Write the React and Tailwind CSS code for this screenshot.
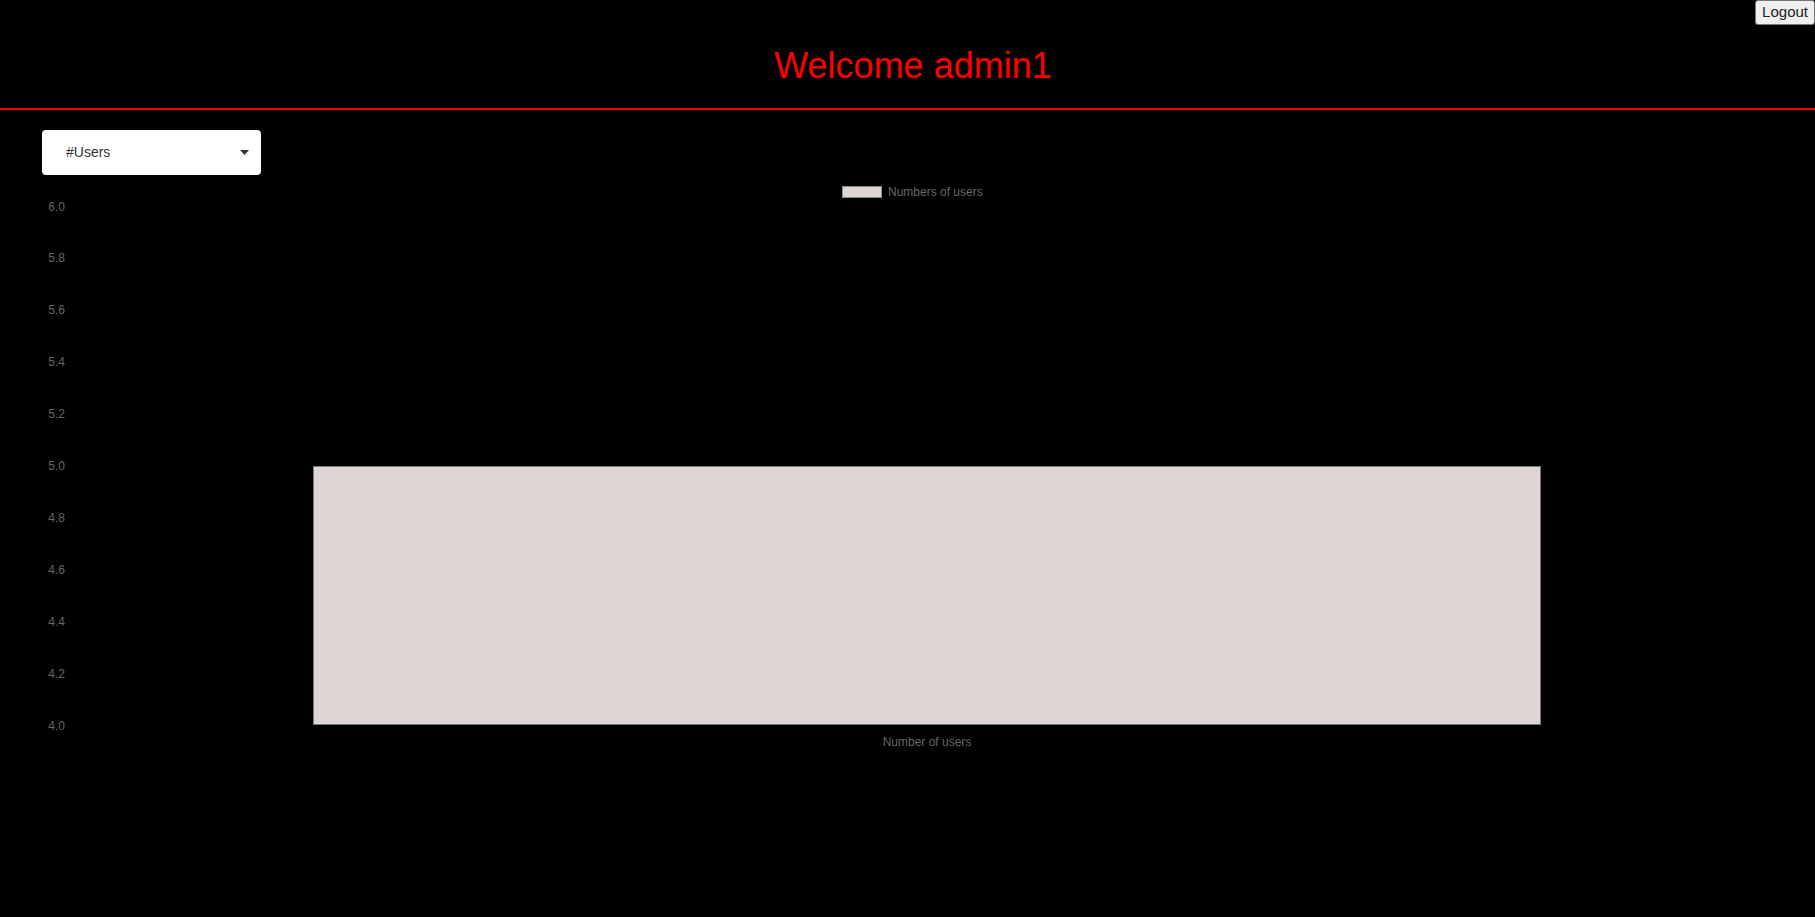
const ticks = ['6.0', '5.8', '5.6', '5.4', '5.2', '5.0', '4.8', '4.6', '4.4', '4.2', '4.0'];

// chart coords are page coords minus the top of the svg (175)
const TOP = 175;
const yFor = (i) => 206.5 + i * 51.9 - TOP;

function UsersChart() {
  return (
    <svg width="1815" height="600" className="block" style={{ fontFamily: '"Liberation Sans", Arial, sans-serif' }}>
      {/* legend */}
      <rect x="842.5" y={186.5 - TOP} width="39" height="11" fill="#e0d5d5" stroke="#8a8a8a" strokeWidth="1" />
      <text x="888" y={196 - TOP} fontSize="12" fill="#666">Numbers of users</text>

      {/* y axis */}
      {ticks.map((t, i) => (
        <text key={t} x="65" y={yFor(i) + 4} fontSize="12" fill="#666" textAnchor="end">
          {t}
        </text>
      ))}

      {/* bar */}
      <rect x="313.5" y={466.5 - TOP} width="1227" height="258" fill="#e0d5d5" stroke="#777" strokeWidth="1" />

      {/* x axis label */}
      <text x="927" y={746 - TOP} fontSize="12" fill="#666" textAnchor="middle">Number of users</text>
    </svg>
  );
}

export default function App() {
  return (
    <div className="relative min-h-screen bg-black" style={{ fontFamily: '"Liberation Sans", Arial, sans-serif' }}>
      <button className="absolute right-0 top-0 h-[25px] px-[6px] text-[15px] text-[#222] bg-[#efefef] border border-[#767676] rounded-[3px]">
        Logout
      </button>

      <header className="h-[110px] border-b-2 border-[#ff0000] flex justify-center pt-[45px] pl-[11px]">
        <h1 className="text-[36px] leading-[41px] text-[#ff0000]">Welcome admin1</h1>
      </header>

      <div className="pl-[42px] pt-[20px]">
        <div className="w-[219px] h-[45px] bg-white rounded-[4px] flex items-center justify-between pl-[24px] pr-[12px]">
          <span className="text-[14px] text-[#333]">#Users</span>
          <svg width="9" height="5" viewBox="0 0 9 5">
            <path d="M0 0 L9 0 L4.5 5 Z" fill="#333" />
          </svg>
        </div>
      </div>

      <UsersChart />
    </div>
  );
}
